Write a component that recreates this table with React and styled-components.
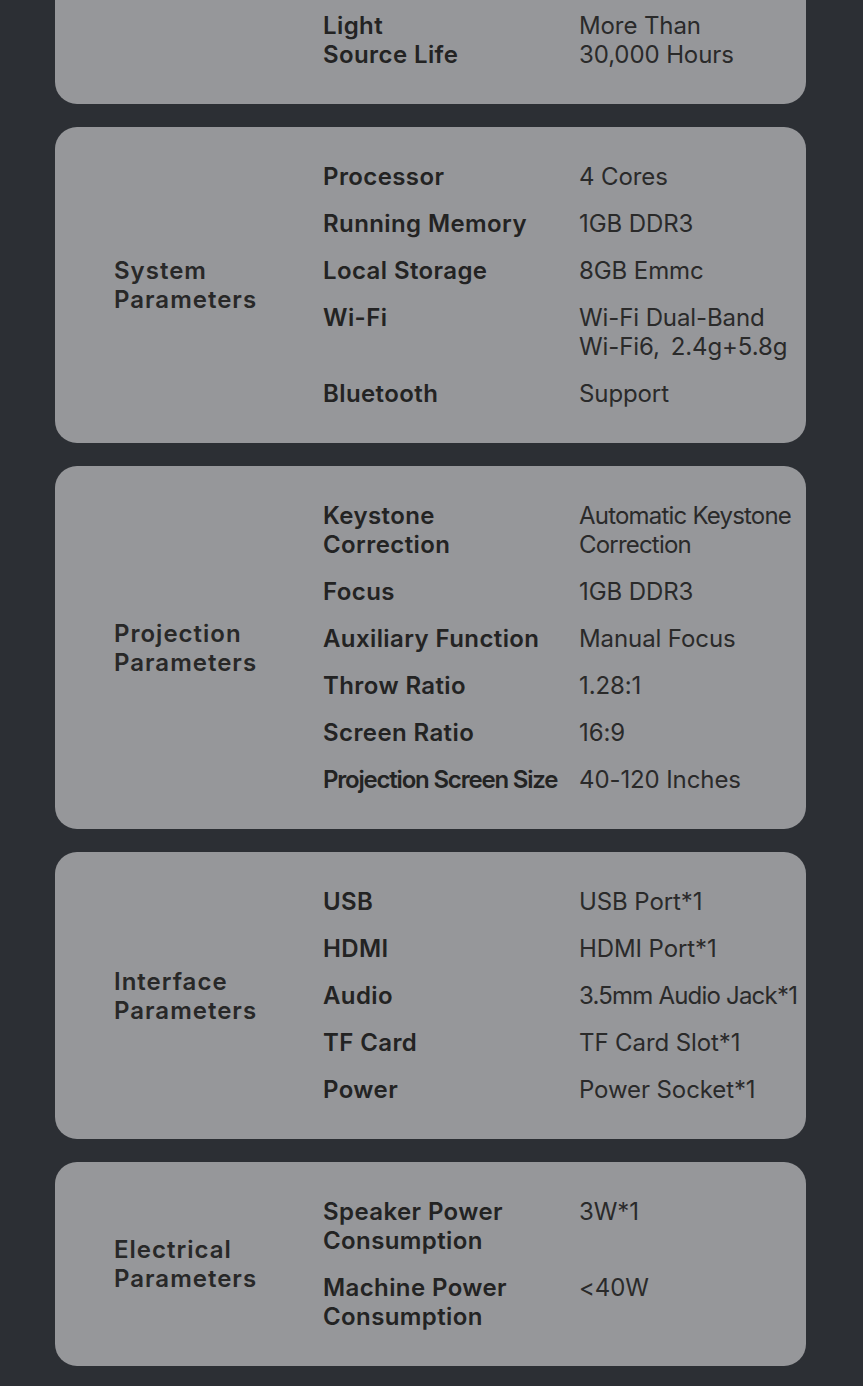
import React from "react";
import styled, { createGlobalStyle } from "styled-components";

const GlobalStyle = createGlobalStyle`
  html, body {
    margin: 0;
    padding: 0;
    background: #2c2f34;
  }
  body {
    font-family: Inter, "Noto Sans", "Liberation Sans", sans-serif;
    overflow: hidden;
  }
`;

const Page = styled.div`
  width: 863px;
  height: 1386px;
  overflow: hidden;
  background: #2c2f34;
`;

const List = styled.div`
  display: flex;
  flex-direction: column;
  gap: 23px;
  margin: -24px 57px 0 55px;
`;

const Card = styled.section`
  display: grid;
  grid-template-columns: 209px 256px 1fr;
  align-items: center;
  padding: 35px 0 35px 59px;
  background: #96979a;
  border-radius: 22px;
  color: #262626;
`;

const GroupTitle = styled.h3`
  margin: 0;
  font-size: 24px;
  line-height: 29px;
  font-weight: 600;
  letter-spacing: 1px;
  color: #282828;
`;

const Rows = styled.div`
  grid-column: 2 / 4;
  display: flex;
  flex-direction: column;
  gap: 18px;
`;

const Row = styled.div`
  display: grid;
  grid-template-columns: 256px 1fr;
  align-items: start;
`;

const Label = styled.div`
  font-size: 24px;
  line-height: 29px;
  font-weight: 600;
  color: #232323;
  letter-spacing: ${({ $tight }) => ($tight ? "-1.2px" : "0.4px")};
  white-space: nowrap;
`;

const Value = styled.div`
  font-size: 24px;
  line-height: 29px;
  font-weight: 400;
  color: #2a2a2a;
  letter-spacing: ${({ $tight }) => ($tight ? "-0.8px" : "-0.1px")};
  white-space: nowrap;
`;

const groups = [
  {
    title: [],
    rows: [{ label: ["Light", "Source Life"], value: ["More Than", "30,000 Hours"] }],
  },
  {
    title: ["System", "Parameters"],
    rows: [
      { label: ["Processor"], value: ["4 Cores"] },
      { label: ["Running Memory"], value: ["1GB DDR3"] },
      { label: ["Local Storage"], value: ["8GB Emmc"] },
      { label: ["Wi-Fi"], value: ["Wi-Fi Dual-Band", "Wi-Fi6,\u00a0\u20092.4g+5.8g"] },
      { label: ["Bluetooth"], value: ["Support"] },
    ],
  },
  {
    title: ["Projection", "Parameters"],
    rows: [
      { label: ["Keystone", "Correction"], value: ["Automatic Keystone", "Correction"], tightValue: true },
      { label: ["Focus"], value: ["1GB DDR3"] },
      { label: ["Auxiliary Function"], value: ["Manual Focus"] },
      { label: ["Throw Ratio"], value: ["1.28:1"] },
      { label: ["Screen Ratio"], value: ["16:9"] },
      { label: ["Projection Screen Size"], value: ["40-120 Inches"], tightLabel: true },
    ],
  },
  {
    title: ["Interface", "Parameters"],
    rows: [
      { label: ["USB"], value: ["USB Port*1"] },
      { label: ["HDMI"], value: ["HDMI Port*1"] },
      { label: ["Audio"], value: ["3.5mm Audio Jack*1"], tightValue: true },
      { label: ["TF Card"], value: ["TF Card Slot*1"] },
      { label: ["Power"], value: ["Power Socket*1"] },
    ],
  },
  {
    title: ["Electrical", "Parameters"],
    rows: [
      { label: ["Speaker Power", "Consumption"], value: ["3W*1"] },
      { label: ["Machine Power", "Consumption"], value: ["<40W"] },
    ],
  },
];

const Lines = ({ lines }) =>
  lines.map((line, i) => (
    <React.Fragment key={i}>
      {i > 0 && <br />}
      {line}
    </React.Fragment>
  ));

const App = () => {
  return (
    <Page>
      <GlobalStyle />
      <List>
        {groups.map((group, gi) => (
          <Card key={gi}>
            <GroupTitle>
              <Lines lines={group.title} />
            </GroupTitle>
            <Rows>
              {group.rows.map((row, ri) => (
                <Row key={ri}>
                  <Label $tight={row.tightLabel}>
                    <Lines lines={row.label} />
                  </Label>
                  <Value $tight={row.tightValue}>
                    <Lines lines={row.value} />
                  </Value>
                </Row>
              ))}
            </Rows>
          </Card>
        ))}
      </List>
    </Page>
  );
};

export default App;
